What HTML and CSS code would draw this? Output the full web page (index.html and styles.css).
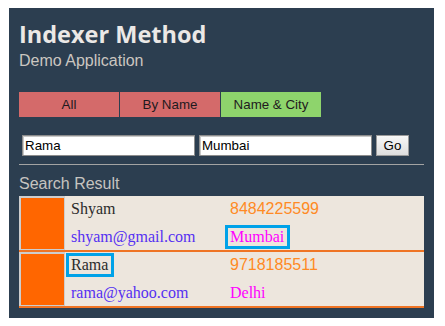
FILE: index.html
```html
<!DOCTYPE html>
<html>
<head>
<meta charset="utf-8">
<link rel="stylesheet" href="styles.css">
</head>
<body>
<div class="panel">
  <h1 class="title">Indexer Method</h1>
  <div class="subtitle">Demo Application</div>
  <div class="tabs">
    <div class="tab">All</div>
    <div class="tab">By Name</div>
    <div class="tab active">Name &amp; City</div>
  </div>
  <div class="search">
    <input class="field-input" type="text" value="Rama">
    <input class="field-input" type="text" value="Mumbai">
    <button class="go">Go</button>
  </div>
  <div class="rule"></div>
  <div class="result-title">Search Result</div>
  <div class="results">
    <div class="row">
      <div class="photo"></div>
      <div class="col col-name">
        <span class="f name">Shyam</span>
        <span class="f email">shyam@gmail.com</span>
      </div>
      <div class="col">
        <span class="f phone">8484225599</span>
        <span class="f city hl">Mumbai</span>
      </div>
    </div>
    <div class="row">
      <div class="photo"></div>
      <div class="col col-name">
        <span class="f name hl">Rama</span>
        <span class="f email">rama@yahoo.com</span>
      </div>
      <div class="col">
        <span class="f phone">9718185511</span>
        <span class="f city">Delhi</span>
      </div>
    </div>
  </div>
</div>
</body>
</html>
```
FILE: styles.css
```css
html, body { background: #ffffff; }
body {
  margin: 8px 0 0 9px;
  font-family: "Liberation Sans", Arial, sans-serif;
}
.panel {
  width: 425px;
  box-sizing: border-box;
  padding: 11px 10px 10px;
  background: #2c3e50;
}
.title {
  margin: 0;
  font-family: "Open Sans", "Liberation Sans", sans-serif;
  font-weight: 700;
  font-size: 23.5px;
  line-height: 31px;
  color: #ebe8e6;
}
.subtitle {
  margin-top: 2px;
  font-size: 16px;
  line-height: 18px;
  color: #cbc6c0;
}
.tabs {
  display: flex;
  gap: 1px;
  margin-top: 22px;
}
.tab {
  width: 100px;
  height: 25px;
  line-height: 25px;
  text-align: center;
  font-size: 13.33px;
  color: #1f1a1e;
  background: #d46a6a;
}
.tab.active { background: #8ed46c; }
.search {
  display: flex;
  gap: 4px;
  margin-top: 18px;
  padding-left: 3px;
}
.field-input {
  width: 173px;
  height: 21px;
  box-sizing: border-box;
  margin: 0;
  padding: 0 2px;
  border: 1px solid #8c8c8c;
  box-shadow: inset 1px 1px 0 #c8c8c8;
  font-family: "Liberation Sans", Arial, sans-serif;
  font-size: 13.33px;
  color: #000;
  background: #fff;
}
.go {
  width: 33px;
  height: 21px;
  margin: 0;
  padding: 0;
  border: 1px solid #9a9a9a;
  background: linear-gradient(#f7f7f7, #dedede);
  font-family: "Liberation Sans", Arial, sans-serif;
  font-size: 13.33px;
  color: #000;
}
.rule {
  margin-top: 8px;
  height: 1px;
  background: #a3a3a3;
}
.result-title {
  margin-top: 10px;
  font-size: 16px;
  line-height: 18px;
  color: #c6c4c0;
}
.results { margin-top: 3px; }
.row {
  display: flex;
  height: 54px;
  background: #ede6dd;
  border-bottom: 2px solid #ef7424;
}
.photo {
  width: 46px;
  box-sizing: border-box;
  background: #ff6600;
  border: 2px solid #cdcdcd;
  border-right-width: 1px;
  border-bottom-width: 1px;
}
.col {
  display: flex;
  flex-direction: column;
  align-items: flex-start;
  gap: 4px;
  padding-top: 1px;
}
.col-name {
  width: 159px;
  margin-left: 1px;
}
.f {
  display: inline-block;
  padding: 0 3px 0 2px;
  border: 3px solid transparent;
  font-size: 16px;
  line-height: 18px;
}
.f.hl { border-color: #00a2e8; }
.name {
  font-family: "Liberation Serif", "Times New Roman", serif;
  color: #2b2b2b;
}
.email {
  font-family: "Liberation Serif", "Times New Roman", serif;
  color: #5530f2;
}
.phone {
  font-family: "Liberation Sans", Arial, sans-serif;
  color: #ff8a24;
}
.city {
  font-family: "Liberation Serif", "Times New Roman", serif;
  color: #ff00ff;
}
```
